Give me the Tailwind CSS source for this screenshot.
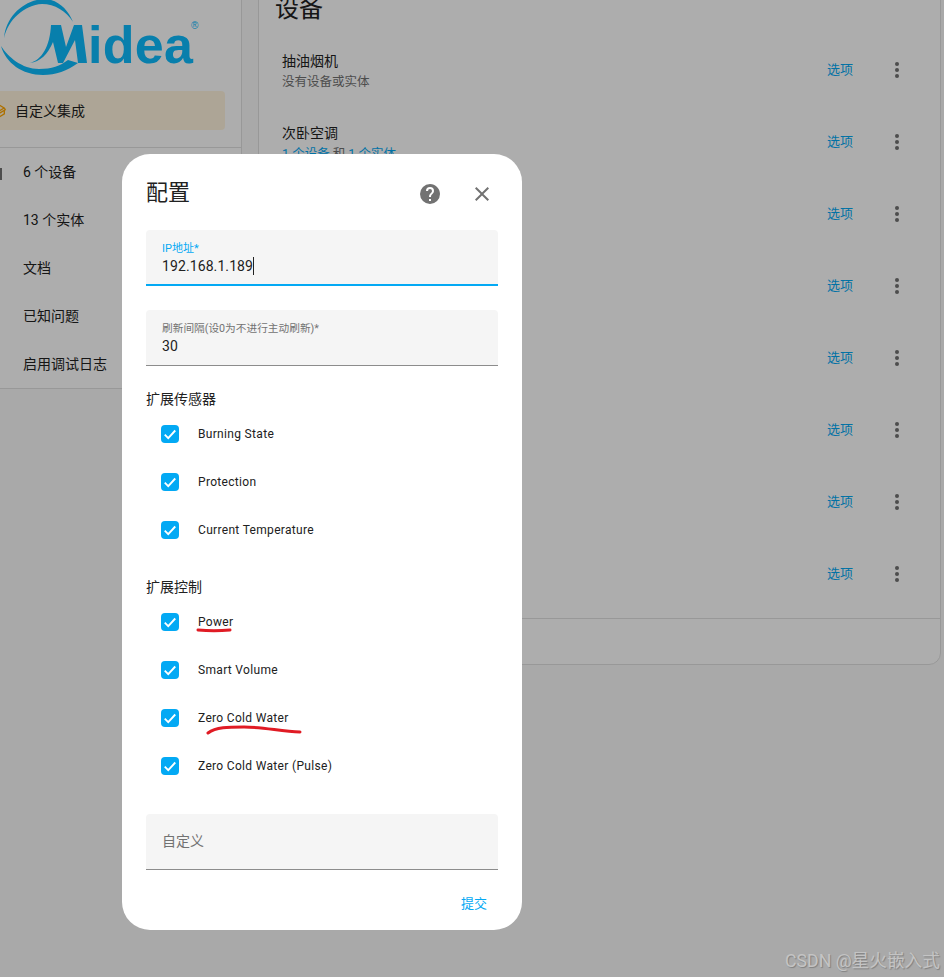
<!DOCTYPE html>
<html lang="en">
<head>
  <meta charset="UTF-8" />
  <title>Midea 配置</title>
  <script src="https://cdn.jsdelivr.net/npm/@tailwindcss/browser@4"></script>
</head>
<body class="bg-[#fafafa] font-['Roboto','Noto_Sans_CJK_SC',sans-serif] text-[#212121]">
<div class="relative w-[944px] h-[977px] overflow-hidden">

  <!-- Page behind the dialog -->
  <div class="flex items-start gap-4 h-full -mt-[40px]">
    <!-- Integration card -->
    <aside class="w-[242px] shrink-0 h-[429px] border-r border-b border-[#e0e0e0] bg-white flex flex-col">
      <div class="h-[131px] pt-[40px] shrink-0">
        <svg width="200" height="80" viewBox="0 0 200 80" class="block">
          <path d="M4 38C6 16 24 0 44 -1C57 -1 68 9 73 22C66 11 55 4 42 4C24 5 8 20 4 38Z" fill="#0cbbfe" />
          <path d="M1 46C8 57 22 69 39 69C52 69 60 66 68 60L78 63C67 71 56 75 43 75C22 75 6 63 1 46Z" fill="#0cbbfe" />
          <path d="M30 63C42 60 50 46 51 25L61 25L66 47L74 25L82 25L87 63L78 63L75 40L63 63L58 63L53 42C48 54 40 62 30 63Z" fill="#0cbbfe" />
          <text x="88" y="63" font-family="Liberation Sans" font-weight="700" font-size="52" textLength="105" fill="#0cbbfe">idea</text>
          <text x="191" y="29" font-family="Liberation Sans" font-size="10" fill="#0cbbfe">®</text>
        </svg>
      </div>
      <div class="shrink-0 mr-4 -ml-4 h-[39px] rounded bg-[#ffa600]/[0.13] flex items-center pl-[7px] text-sm">
        <svg class="mr-2 w-4 h-4" viewBox="0 0 24 24" fill="#ffa600"><path d="M2,10.96C1.5,10.68 1.35,10.07 1.63,9.59L3.13,7C3.24,6.8 3.41,6.66 3.6,6.58L11.43,2.18C11.59,2.06 11.79,2 12,2C12.21,2 12.41,2.06 12.57,2.18L20.47,6.62C20.66,6.72 20.82,6.88 20.91,7.08L22.36,9.6C22.64,10.08 22.47,10.69 22,10.96L21,11.54V16.5C21,16.88 20.79,17.21 20.47,17.38L12.57,21.82C12.41,21.94 12.21,22 12,22C11.79,22 11.59,21.94 11.43,21.82L3.53,17.38C3.21,17.21 3,16.88 3,16.5V10.96C2.7,11.13 2.32,11.14 2,10.96M12,4.15V4.15L12,10.85V10.85L17.96,7.5L12,4.15M5,15.91L11,19.29V12.58L5,9.21V15.91M19,15.91V12.69L14,15.6C13.67,15.79 13.29,15.79 13,15.62V19.29L19,15.91M13.85,13.36L20.13,9.73L19.55,8.72L13.27,12.35L13.85,13.36Z" /></svg>自定义集成
      </div>
      <div class="shrink-0 mt-[17px] border-t border-[#e0e0e0]">
        <div class="relative h-12 flex items-center pl-[23px] text-sm"><span class="absolute left-0 top-[20px] w-[2px] h-3 bg-[#727272]"></span>6 个设备</div>
        <div class="h-12 flex items-center pl-[23px] text-sm">13 个实体</div>
        <div class="h-12 flex items-center pl-[23px] text-sm">文档</div>
        <div class="h-12 flex items-center pl-[23px] text-sm">已知问题</div>
        <div class="h-12 flex items-center pl-[23px] text-sm">启用调试日志</div>
      </div>
    </aside>

    <!-- Devices card -->
    <main class="w-[683px] h-[705px] shrink-0 border border-[#e0e0e0] rounded-b-xl bg-white">
      <h2 class="text-2xl h-[73px] pl-4 pt-[32px] leading-8">设备</h2>
      <div class="border-b border-[#e0e0e0] h-[585px]">
        <div class="h-[72px] flex items-center pl-[23px] pr-[30px]">
          <div class="flex-1 pt-[3px]"><div class="text-sm leading-5">抽油烟机</div><div class="mt-px text-[12.5px] leading-5 text-[#727272]">没有设备或实体</div></div>
          <span class="text-[13px] text-[#03a9f4] mr-[33px]">选项</span>
          <svg width="24" height="24" viewBox="0 0 24 24" fill="#727272"><circle cx="11" cy="6" r="2" /><circle cx="11" cy="12" r="2" /><circle cx="11" cy="18" r="2" /></svg>
        </div>
        <div class="h-[72px] flex items-center pl-[23px] pr-[30px]">
          <div class="flex-1 pt-[3px]"><div class="text-sm leading-5">次卧空调</div><div class="mt-px text-[12.5px] leading-5 text-[#727272]"><span class="text-[#03a9f4]">1 个设备</span> 和 <span class="text-[#03a9f4]">1 个实体</span></div></div>
          <span class="text-[13px] text-[#03a9f4] mr-[33px]">选项</span>
          <svg width="24" height="24" viewBox="0 0 24 24" fill="#727272"><circle cx="11" cy="6" r="2" /><circle cx="11" cy="12" r="2" /><circle cx="11" cy="18" r="2" /></svg>
        </div>
        <div class="h-[72px] flex items-center justify-end pr-[30px]">
          <span class="text-[13px] text-[#03a9f4] mr-[33px]">选项</span>
          <svg width="24" height="24" viewBox="0 0 24 24" fill="#727272"><circle cx="11" cy="6" r="2" /><circle cx="11" cy="12" r="2" /><circle cx="11" cy="18" r="2" /></svg>
        </div>
        <div class="h-[72px] flex items-center justify-end pr-[30px]">
          <span class="text-[13px] text-[#03a9f4] mr-[33px]">选项</span>
          <svg width="24" height="24" viewBox="0 0 24 24" fill="#727272"><circle cx="11" cy="6" r="2" /><circle cx="11" cy="12" r="2" /><circle cx="11" cy="18" r="2" /></svg>
        </div>
        <div class="h-[72px] flex items-center justify-end pr-[30px]">
          <span class="text-[13px] text-[#03a9f4] mr-[33px]">选项</span>
          <svg width="24" height="24" viewBox="0 0 24 24" fill="#727272"><circle cx="11" cy="6" r="2" /><circle cx="11" cy="12" r="2" /><circle cx="11" cy="18" r="2" /></svg>
        </div>
        <div class="h-[72px] flex items-center justify-end pr-[30px]">
          <span class="text-[13px] text-[#03a9f4] mr-[33px]">选项</span>
          <svg width="24" height="24" viewBox="0 0 24 24" fill="#727272"><circle cx="11" cy="6" r="2" /><circle cx="11" cy="12" r="2" /><circle cx="11" cy="18" r="2" /></svg>
        </div>
        <div class="h-[72px] flex items-center justify-end pr-[30px]">
          <span class="text-[13px] text-[#03a9f4] mr-[33px]">选项</span>
          <svg width="24" height="24" viewBox="0 0 24 24" fill="#727272"><circle cx="11" cy="6" r="2" /><circle cx="11" cy="12" r="2" /><circle cx="11" cy="18" r="2" /></svg>
        </div>
        <div class="h-[72px] flex items-center justify-end pr-[30px]">
          <span class="text-[13px] text-[#03a9f4] mr-[33px]">选项</span>
          <svg width="24" height="24" viewBox="0 0 24 24" fill="#727272"><circle cx="11" cy="6" r="2" /><circle cx="11" cy="12" r="2" /><circle cx="11" cy="18" r="2" /></svg>
        </div>
      </div>
    </main>
  </div>

  <!-- Scrim -->
  <div class="absolute inset-0 bg-black/32"></div>

  <!-- Dialog -->
  <div class="absolute left-[122px] top-[154px] w-[400px] h-[776px] rounded-[28px] bg-white px-6">
    <div class="h-[76px] flex items-center justify-between">
      <h2 class="text-[22px] pt-[1px]">配置</h2>
      <div class="flex items-center gap-7 pr-1 pt-1">
        <svg width="24" height="24" viewBox="0 0 24 24" fill="#727272"><path d="M15.07 11.25l-.9.92C13.45 12.89 13 13.5 13 15h-2v-.5c0-1.11.45-2.11 1.17-2.83l1.24-1.26c.37-.36.59-.86.59-1.41a2 2 0 0 0-2-2 2 2 0 0 0-2 2H8a4 4 0 0 1 4-4 4 4 0 0 1 4 4c0 .88-.36 1.67-.93 2.25M13 19h-2v-2h2M12 2A10 10 0 0 0 2 12a10 10 0 0 0 10 10 10 10 0 0 0 10-10c0-5.53-4.5-10-10-10z" /></svg>
        <svg width="24" height="24" viewBox="0 0 24 24" fill="#727272"><path d="M19 6.41L17.59 5 12 10.59 6.41 5 5 6.41 10.59 12 5 17.59 6.41 19 12 13.41 17.59 19 19 17.59 13.41 12z" /></svg>
      </div>
    </div>

    <div class="h-14 rounded-t bg-[#f5f5f5] border-b-2 border-[#03a9f4] px-4 pt-[12px]">
      <div class="text-[11px] leading-[14px] text-[#03a9f4]">IP地址*</div>
      <div class="text-sm leading-[21px] tracking-[0.1px]">192.168.1.189<span class="inline-block w-px h-[18px] bg-[#212121] align-[-4px]"></span></div>
    </div>

    <div class="mt-6 h-14 rounded-t bg-[#f5f5f5] border-b border-[#8c8c8c] px-4 pt-[12px]">
      <div class="text-[10.7px] leading-[14px] text-[#727272]">刷新间隔(设0为不进行主动刷新)*</div>
      <div class="text-sm leading-[21px] tracking-[0.1px]">30</div>
    </div>

    <div class="mt-[23px] text-sm leading-5">扩展传感器</div>
    <div class="mt-px">
      <label class="h-12 flex items-center pl-[15px] text-xs tracking-[0.32px]">
        <span class="w-[18px] h-[18px] rounded-sm bg-[#03a9f4] flex items-center justify-center mr-[19px]"><svg width="14" height="14" viewBox="0 0 24 24" fill="none" stroke="#fff" stroke-width="3.2"><path d="M3 13l6 6L21 6" /></svg></span>Burning State
      </label>
      <label class="h-12 flex items-center pl-[15px] text-xs tracking-[0.32px]">
        <span class="w-[18px] h-[18px] rounded-sm bg-[#03a9f4] flex items-center justify-center mr-[19px]"><svg width="14" height="14" viewBox="0 0 24 24" fill="none" stroke="#fff" stroke-width="3.2"><path d="M3 13l6 6L21 6" /></svg></span>Protection
      </label>
      <label class="h-12 flex items-center pl-[15px] text-xs tracking-[0.32px]">
        <span class="w-[18px] h-[18px] rounded-sm bg-[#03a9f4] flex items-center justify-center mr-[19px]"><svg width="14" height="14" viewBox="0 0 24 24" fill="none" stroke="#fff" stroke-width="3.2"><path d="M3 13l6 6L21 6" /></svg></span>Current Temperature
      </label>
    </div>

    <div class="mt-[23px] text-sm leading-5">扩展控制</div>
    <div class="mt-px">
      <label class="h-12 flex items-center pl-[15px] text-xs tracking-[0.32px]">
        <span class="w-[18px] h-[18px] rounded-sm bg-[#03a9f4] flex items-center justify-center mr-[19px]"><svg width="14" height="14" viewBox="0 0 24 24" fill="none" stroke="#fff" stroke-width="3.2"><path d="M3 13l6 6L21 6" /></svg></span>Power
      </label>
      <label class="h-12 flex items-center pl-[15px] text-xs tracking-[0.32px]">
        <span class="w-[18px] h-[18px] rounded-sm bg-[#03a9f4] flex items-center justify-center mr-[19px]"><svg width="14" height="14" viewBox="0 0 24 24" fill="none" stroke="#fff" stroke-width="3.2"><path d="M3 13l6 6L21 6" /></svg></span>Smart Volume
      </label>
      <label class="h-12 flex items-center pl-[15px] text-xs tracking-[0.32px]">
        <span class="w-[18px] h-[18px] rounded-sm bg-[#03a9f4] flex items-center justify-center mr-[19px]"><svg width="14" height="14" viewBox="0 0 24 24" fill="none" stroke="#fff" stroke-width="3.2"><path d="M3 13l6 6L21 6" /></svg></span>Zero Cold Water
      </label>
      <label class="h-12 flex items-center pl-[15px] text-xs tracking-[0.32px]">
        <span class="w-[18px] h-[18px] rounded-sm bg-[#03a9f4] flex items-center justify-center mr-[19px]"><svg width="14" height="14" viewBox="0 0 24 24" fill="none" stroke="#fff" stroke-width="3.2"><path d="M3 13l6 6L21 6" /></svg></span>Zero Cold Water (Pulse)
      </label>
    </div>

    <div class="mt-6 h-14 rounded-t bg-[#f5f5f5] border-b border-[#8c8c8c] px-4 pb-[2px] flex items-center text-sm text-[#727272]">自定义</div>

    <div class="mt-[22px] flex justify-end pr-[11px] text-[13px] leading-6 text-[#03a9f4]">提交</div>
  </div>

  <!-- Red pen marks on top of the screenshot -->
  <svg class="absolute inset-0 pointer-events-none" width="944" height="977" fill="none" stroke="#e01b24" stroke-linecap="round">
    <path d="M198 630C208 631 220 631 230 630" stroke-width="3" />
    <path d="M208 733C216 727 228 727 244 727C262 727 280 731 300 732" stroke-width="3" />
  </svg>

  <!-- Watermark -->
  <div class="absolute right-[4px] bottom-[4px] text-[17.7px] leading-6 text-[#c4c4c4] [text-shadow:1px_1px_1px_#808080]">CSDN @星火嵌入式</div>
</div>
</body>
</html>
